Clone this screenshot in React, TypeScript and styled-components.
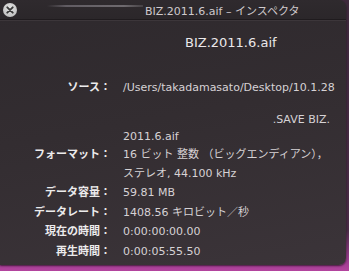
import styled, { createGlobalStyle } from 'styled-components';

const GlobalStyle = createGlobalStyle`
  html, body {
    margin: 0;
    padding: 0;
  }
  body {
    width: 349px;
    height: 271px;
    overflow: hidden;
    background: linear-gradient(180deg, #3e2a3c 0%, #4a2c46 85%, #9a3c8e 96%, #b4449e 100%);
    font-family: "DejaVu Sans", "Noto Sans CJK JP", sans-serif;
  }
`;

const Window = styled.div`
  width: 346px;
  height: 265px;
  border-radius: 0 7px 7px 0;
  overflow: hidden;
  background: linear-gradient(170deg, #2e292d 0%, #332d31 45%, #3b3439 100%);
  box-shadow: 0 1px 2px rgba(0, 0, 0, 0.6);
  display: flex;
  flex-direction: column;
`;

const TitleBar = styled.div`
  height: 19px;
  flex: none;
  display: flex;
  align-items: center;
  padding-left: 3px;
  border-bottom: 1px solid #1f1b1e;
  box-shadow: 0 1px 0 #3c363a;
  background: linear-gradient(180deg, #2f2a2e, #2b272a);
`;

const CloseButton = styled.div`
  width: 14px;
  height: 14px;
  flex: none;
  border-radius: 50%;
  background: radial-gradient(circle at 50% 35%, #e2e2e2, #b8b8b8);
  display: flex;
  align-items: center;
  justify-content: center;
`;

const Streak = styled.div`
  width: 96px;
  height: 2px;
  flex: none;
  margin: 0 0 8px 30px;
  background: linear-gradient(90deg, rgba(120,116,118,0), #77727a 20%, #8a868b 80%, rgba(130,126,130,0.4));
  opacity: 0.7;
`;

const Title = styled.div`
  font-size: 11px;
  color: #cfcacd;
  margin-left: 2px;
  white-space: nowrap;
`;

const Content = styled.div`
  padding-top: 14px;
  display: flex;
  flex-direction: column;
`;

const FileName = styled.div`
  font-size: 13px;
  color: #ebe8ea;
  padding-left: 185px;
  line-height: 18px;
  margin-bottom: 27px;
`;

const Rows = styled.div`
  display: flex;
  flex-direction: column;
`;

const Row = styled.div<{ $lh?: number }>`
  display: grid;
  grid-template-columns: 111px 212px;
  column-gap: 12px;
  font-size: 11px;
  line-height: ${p => p.$lh ?? 19.5}px;
`;

const Label = styled.div`
  text-align: right;
  color: #ecebec;
  font-weight: bold;
  white-space: nowrap;
`;

const Value = styled.div`
  color: #d6d2d5;
  display: flex;
  flex-direction: column;
`;

const Line = styled.div<{ $right?: boolean; $mt?: number }>`
  white-space: nowrap;
  text-align: ${p => (p.$right ? 'right' : 'left')};
  margin-top: ${p => p.$mt ?? 0}px;
  padding-right: ${p => (p.$right ? 5 : 0)}px;
`;

const XIcon = () => (
  <svg width="8" height="8" viewBox="0 0 8 8">
    <path d="M1.3 1.3 L6.7 6.7 M6.7 1.3 L1.3 6.7" stroke="#3a3a3a" strokeWidth="1.9" strokeLinecap="round" />
  </svg>
);

const info = [
  { label: 'データ容量：', value: '59.81 MB' },
  { label: 'データレート：', value: '1408.56 キロビット／秒' },
  { label: '現在の時間：', value: '0:00:00:00.00' },
  { label: '再生時間：', value: '0:00:05:55.50' },
];

export default function App() {
  return (
    <>
      <GlobalStyle />
      <Window>
        <TitleBar>
          <CloseButton>
            <XIcon />
          </CloseButton>
          <Streak />
          <Title>BIZ.2011.6.aif – インスペクタ</Title>
        </TitleBar>
        <Content>
          <FileName>BIZ.2011.6.aif</FileName>
          <Rows>
            <Row $lh={17}>
              <Label>ソース：</Label>
              <Value>
                <Line>/Users/takadamasato/Desktop/10.1.28</Line>
                <Line $right $mt={15}>.SAVE BIZ.</Line>
                <Line>2011.6.aif</Line>
              </Value>
            </Row>
            <Row $lh={19}>
              <Label>フォーマット：</Label>
              <Value>
                <Line>16 ビット 整数 （ビッグエンディアン），</Line>
                <Line>ステレオ, 44.100 kHz</Line>
              </Value>
            </Row>
            {info.map(r => (
              <Row key={r.label}>
                <Label>{r.label}</Label>
                <Value>
                  <Line>{r.value}</Line>
                </Value>
              </Row>
            ))}
          </Rows>
        </Content>
      </Window>
    </>
  );
}
